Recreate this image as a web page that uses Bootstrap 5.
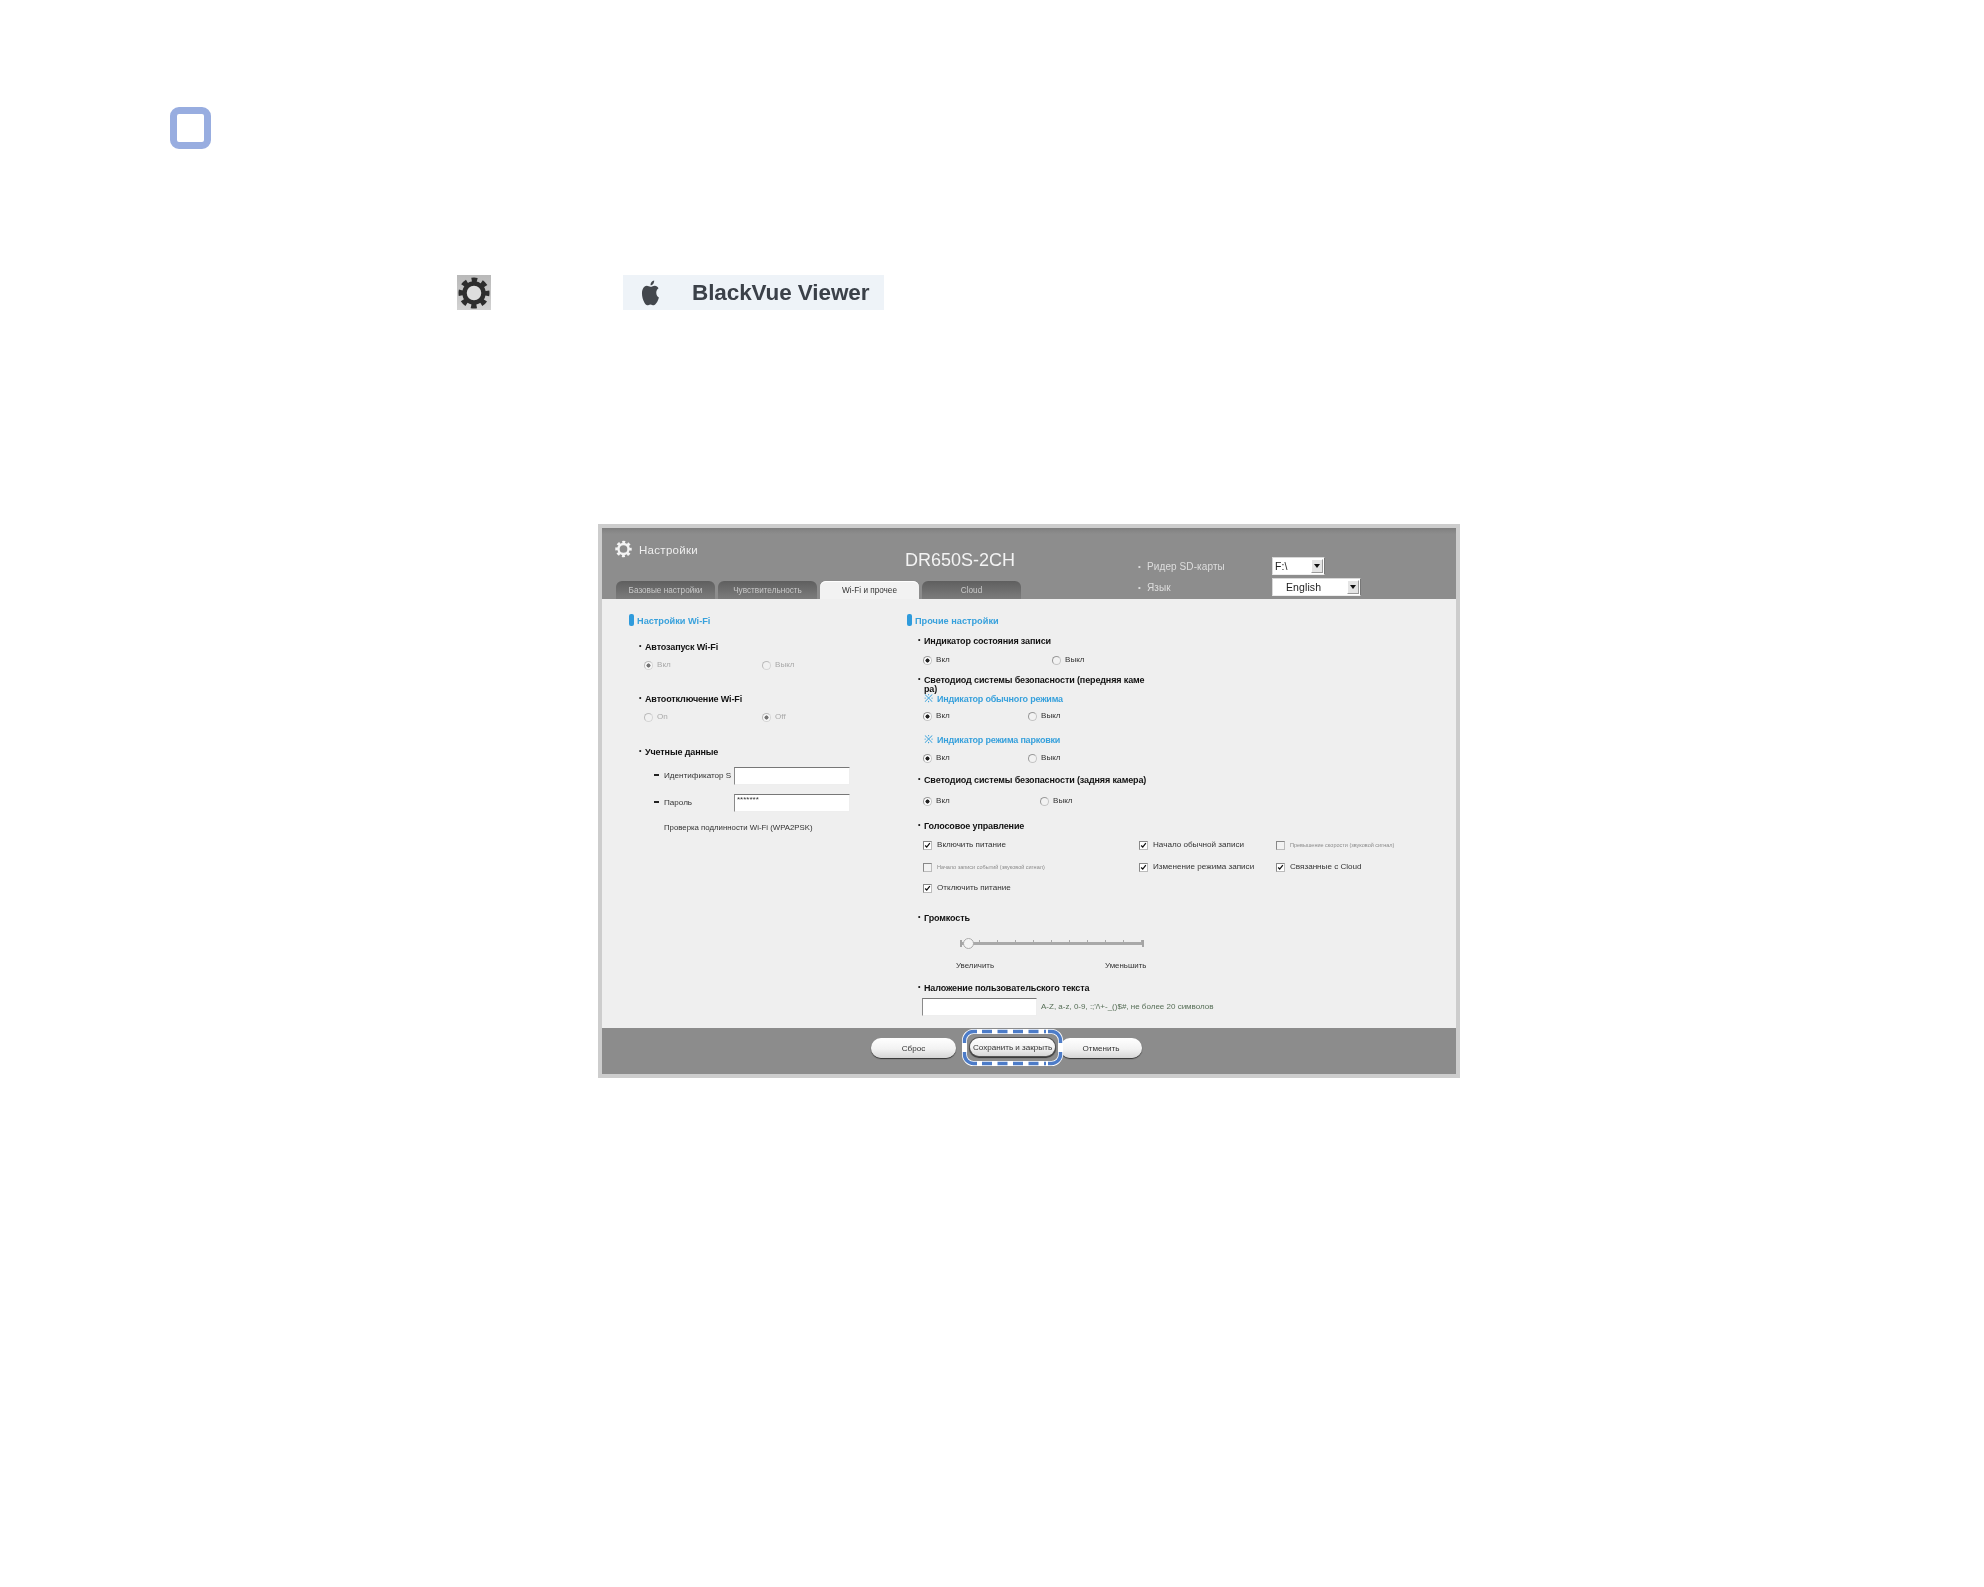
<!DOCTYPE html>
<html lang="ru">
<head>
  <meta charset="UTF-8">
  <title>BlackVue Viewer</title>
  <link href="https://cdn.jsdelivr.net/npm/bootstrap@5.3.0/dist/css/bootstrap.min.css" rel="stylesheet">
  <style>
    body { margin: 0; background: #fff; font-family: "Liberation Sans", Arial, sans-serif; }
    .page-wrap { width: 1984px; height: 1587px; padding-top: 107px; overflow: hidden; }

    .note-mark { width: 41px; height: 42px; margin-left: 170px; border: 7px solid #98ade0; border-radius: 9px; }
    .icon-row { margin-top: 126px; height: 35px; padding-left: 457px; }
    .gear-tile { width: 34px; height: 35px; background: linear-gradient(#b9b9b9, #d2d2d2); }
    .gear-tile svg { filter: blur(.6px); }
    .viewer-tile { width: 261px; height: 35px; margin-left: 132px; padding-left: 17px; background: #eef3f8; color: #3b4149; }
    .viewer-tile > * { filter: blur(.35px); }
    .viewer-name { margin-left: 31px; font-size: 22.5px; font-weight: 700; letter-spacing: -.1px; }

    .shot { width: 862px; height: 554px; margin: 214px 0 0 598px; border: 4px solid #cdcdcd; background: #efefef; font-size: 8.1px; color: #333; }
    .shot-head, .shot-body, .shot-foot { filter: blur(.3px); }

    .shot-head { height: 71px; background: linear-gradient(#7f7f7f, #8d8d8d 6px); color: #eee; }
    .head-left { width: 536px; padding-left: 13px; }
    .head-top { height: 53px; }
    .title-box { width: 290px; padding-top: 12px; font-size: 11.5px; line-height: 20px; letter-spacing: .3px; }
    .title-box svg { margin-right: 7px; }
    .model-name { padding-top: 22px; font-size: 18px; line-height: 20px; color: #f3f3f3; }
    .tab-strip { padding-left: 1px; gap: 3px; }
    .tab-item { width: 99px; height: 18px; line-height: 19px; padding: 0; text-align: center; border-radius: 6px 6px 0 0; background: linear-gradient(#5f5f5f, #7c7c7c); color: #c9c9c9; font-size: 8.2px; }
    .tab-item.tab-on { line-height: 20px; background: #f2f2f2; color: #333; box-shadow: inset 0 1px 0 #fff; }
    .head-right { padding-top: 29px; gap: 3px; }
    .reader-row { height: 18px; font-size: 10px; color: #ddd; letter-spacing: .1px; }
    .reader-name { width: 134px; }
    .reader-name::before { content: "•"; display: inline-block; width: 9px; font-size: 8px; vertical-align: 1px; }
    .fake-select { height: 18px; background: #fff; border: 1px solid #d8d8d8; border-right-color: #777; border-bottom-color: #eee; color: #222; font-size: 10.5px; line-height: 16px; }
    .select-short { width: 53px; padding-left: 2px; }
    .select-long { width: 89px; padding-left: 13px; }
    .fake-select i { width: 12px; height: 14px; margin: 1px; background: #e4e4e4; border: 1px solid #999; border-top-color: #fff; border-left-color: #fff; }
    .fake-select i::after { content: ""; border: 3px solid transparent; border-top: 4px solid #111; border-bottom: 0; }

    .shot-body { height: 429px; padding-top: 15px; }
    .col-wifi { width: 305px; padding-left: 27px; display: grid; align-content: start; grid-template-rows: 26px 18px 34px 18px 35px 24px 27px 25px 14px; }
    .col-other { width: 549px; display: grid; align-content: start; grid-template-rows: 20px 19px 19px 19px 18px 23px 19px 22px 21px 25px 19px 22px 21px 30px 25px 23px 22px 19px; }

    .line-item { height: 14px; line-height: 14px; white-space: nowrap; }
    .sec-title { color: #38a1dc; font-weight: 700; font-size: 9.2px; }
    .sec-title::before { content: ""; display: inline-block; width: 5px; height: 12px; margin-right: 3px; border-radius: 2px; background: #2f9bdc; vertical-align: -2px; }
    .bold-label { margin-top: -1px; font-weight: 700; color: #111; font-size: 9px; letter-spacing: -.13px; }
    .bold-label::before { content: "•"; display: inline-block; width: 6px; font-size: 7px; vertical-align: 2px; }
    .col-wifi .bold-label { padding-left: 10px; }
    .col-other .bold-label { padding-left: 11px; }
    .col-other .wrap-label { white-space: normal; word-break: break-all; width: 242px; line-height: 9px; padding-top: 3px; padding-left: 17px; text-indent: -6px; }
    .wrap-label::before { text-indent: 0; }
    .note-label { padding-left: 17px; color: #38a1dc; font-weight: 700; font-size: 9px; letter-spacing: -.2px; }
    .note-label b { display: inline-block; width: 13px; font-size: 11px; font-weight: 400; }

    .opt-row { padding-left: 15px; }
    .col-other .opt-row { padding-left: 16px; }
    .opt-118 > label:first-child { width: 118px; }
    .opt-129 > label:first-child { width: 129px; }
    .opt-105 > label:first-child { width: 105px; }
    .opt-117 > label:first-child { width: 117px; }
    .opt-row label { display: flex; align-items: center; gap: 4px; }
    .is-off { color: #a9a9a9; }
    .shot .form-check-input { width: 9px; height: 9px; margin: 0; float: none; flex: none; background-color: #f2f2f2; border: 1px solid #c4c4c4; border-top-color: #999; border-left-color: #999; box-shadow: none; }
    .shot .form-check-input[type=radio]:checked { background-color: #fff; background-image: radial-gradient(circle, #222 0 1.8px, transparent 2.3px); background-size: auto; }
    .shot .form-check-input[type=checkbox] { border-radius: 0; border-color: #888; border-right-color: #bbb; border-bottom-color: #bbb; }
    .shot .form-check-input[type=checkbox]:checked { background-color: #fff; background-image: url("data:image/svg+xml,%3csvg xmlns='http://www.w3.org/2000/svg' viewBox='0 0 9 9'%3e%3cpath fill='none' stroke='%23111' stroke-width='1.6' d='M1.5 4.5l2 2 4-5'/%3e%3c/svg%3e"); background-size: 100%; }
    .is-off .form-check-input { opacity: .6; }

    .cred-row { padding-left: 25px; }
    .cred-row > span { width: 80px; }
    .cred-row > span::before { content: ""; display: inline-block; width: 5px; height: 2px; margin-right: 5px; background: #222; vertical-align: 2px; }
    .cred-field { width: 116px; height: 18px; margin-top: -2px; padding: 0 2px; line-height: 9px; font-size: 8px; background: #fff; border: 1px solid #eee; border-top: 1px solid #777; border-left: 1px solid #8a8a8a; border-radius: 0; }
    .auth-note { padding-left: 35px; font-size: 7.8px; }

    .check-grid { padding-left: 16px; display: grid; grid-template-columns: 216px 137px 1fr; }
    .check-grid label { display: flex; align-items: center; gap: 5px; }
    .tiny-text { font-size: 5.5px; color: #8b8b8b; }

    .vol-box { position: relative; width: 184px; height: 7px; margin: 4px 0 0 53px; border-left: 2px solid #a4a4a4; border-right: 2px solid #a4a4a4; }
    .vol-line { height: 3px; margin-top: 2px; background: #a9a9a9; }
    .vol-ticks { position: absolute; inset: 0; background: repeating-linear-gradient(90deg, transparent 0 17px, #a9a9a9 17px 18px); clip-path: inset(0 0 4px 0); }
    .vol-knob { position: absolute; left: 1px; top: -2px; width: 11px; height: 11px; border-radius: 50%; background: #f4f4f4; border: 1px solid #aaa; }
    .vol-labels { padding-left: 49px; font-size: 7.9px; }
    .vol-labels span:first-child { width: 149px; }
    .text-row { padding-left: 15px; }
    .overlay-field { width: 115px; height: 18px; margin-top: -2px; margin-right: 4px; background: #fff; border: 1px solid #eee; border-top: 1px solid #777; border-left: 1px solid #8a8a8a; }
    .hint-text { color: #566e56; font-size: 8px; }

    .shot-foot { height: 46px; padding: 10px 0 0 269px; background: #8c8c8c; }
    .foot-btn { height: 20px; padding: 0; border: 0; border-radius: 10px; background: linear-gradient(#fff, #f2f2f2 55%, #d6d6d6); box-shadow: 0 1px 1px #333; color: #333; font-size: 8.1px; line-height: 21px; }
    .btn-reset { width: 85px; margin-right: 13px; }
    .btn-save { display: block; width: 85px; height: 18px; margin-left: 1px; line-height: 20px; box-shadow: 0 0 0 1px #555, 0 1px 1px 1px #333; }
    .btn-cancel { width: 82px; margin-left: 5px; }
    .save-wrap { position: relative; }
    .save-mark { position: absolute; left: -7px; top: -9px; pointer-events: none; }
  </style>
</head>
<body>
<div class="page-wrap">
  <div class="note-mark"></div>

  <div class="icon-row d-flex">
    <div class="gear-tile d-flex align-items-center justify-content-center">
      <svg width="32" height="32" viewBox="0 0 32 32">
        <circle cx="16" cy="16" r="13" fill="none" stroke="#2d2d2d" stroke-width="5" stroke-dasharray="5.5 4.71" stroke-dashoffset="2.75"/>
        <circle cx="16" cy="16" r="9.5" fill="#dedede" stroke="#2d2d2d" stroke-width="4.5"/>
      </svg>
    </div>
    <div class="viewer-tile d-flex align-items-center">
      <svg width="21" height="26" viewBox="0 0 16 16" preserveAspectRatio="none">
        <path fill="#43474d" d="M8 4.2C9.2 4.2 10 3.5 11.3 3.5c1.2 0 2.2.6 2.8 1.5-1.3.8-1.8 1.9-1.7 3 .1 1.3.8 2.2 2 2.7-.4 1.2-1.1 2.5-1.9 3.5-.6.7-1.2 1.3-2.1 1.3-1 0-1.3-.5-2.4-.5s-1.5.5-2.4.5-1.6-.7-2.2-1.5C2.2 12.3 1.5 10.2 1.5 8.3c0-2.9 1.8-4.7 3.7-4.7C6.3 3.6 7.1 4.2 8 4.2zM8 3.3C7.9 1.8 9.2.4 10.8.3c.1 1.6-1.3 3.1-2.8 3z"/>
      </svg>
      <span class="viewer-name">BlackVue Viewer</span>
    </div>
  </div>

  <div class="shot d-flex flex-column">
    <div class="shot-head d-flex">
      <div class="head-left">
        <div class="head-top d-flex">
          <div class="title-box">
            <svg width="17" height="18" viewBox="0 0 32 32" class="align-top">
              <circle cx="16" cy="16" r="13" fill="none" stroke="#f4f4f4" stroke-width="5" stroke-dasharray="5.5 4.71" stroke-dashoffset="2.75"/>
              <circle cx="16" cy="16" r="9.5" fill="#8c8c8c" stroke="#f4f4f4" stroke-width="4.5"/>
            </svg>Настройки
          </div>
          <div class="model-name">DR650S-2CH</div>
        </div>
        <ul class="nav tab-strip">
          <li><a class="nav-link tab-item">Базовые настройки</a></li>
          <li><a class="nav-link tab-item">Чувствительность</a></li>
          <li><a class="nav-link tab-item tab-on">Wi-Fi и прочее</a></li>
          <li><a class="nav-link tab-item">Cloud</a></li>
        </ul>
      </div>
      <div class="head-right d-flex flex-column">
        <div class="reader-row d-flex align-items-center">
          <span class="reader-name">Ридер SD-карты</span>
          <div class="fake-select select-short d-flex justify-content-between">F:\<i class="d-flex align-items-center justify-content-center"></i></div>
        </div>
        <div class="reader-row d-flex align-items-center">
          <span class="reader-name">Язык</span>
          <div class="fake-select select-long d-flex justify-content-between">English<i class="d-flex align-items-center justify-content-center"></i></div>
        </div>
      </div>
    </div>

    <div class="shot-body d-flex">
      <div class="col-wifi">
        <div class="line-item sec-title">Настройки Wi-Fi</div>
        <div class="line-item bold-label">Автозапуск Wi-Fi</div>
        <div class="line-item opt-row opt-118 is-off d-flex">
          <label><input class="form-check-input" type="radio" name="wa" checked disabled>Вкл</label>
          <label><input class="form-check-input" type="radio" name="wa" disabled>Выкл</label>
        </div>
        <div class="line-item bold-label">Автоотключение Wi-Fi</div>
        <div class="line-item opt-row opt-118 is-off d-flex">
          <label><input class="form-check-input" type="radio" name="wo" disabled>On</label>
          <label><input class="form-check-input" type="radio" name="wo" checked disabled>Off</label>
        </div>
        <div class="line-item bold-label">Учетные данные</div>
        <div class="line-item cred-row d-flex">
          <span>Идентификатор S</span>
          <input class="cred-field" type="text">
        </div>
        <div class="line-item cred-row d-flex">
          <span>Пароль</span>
          <div class="cred-field">*******</div>
        </div>
        <div class="line-item auth-note">Проверка подлинности Wi-Fi (WPA2PSK)</div>
      </div>

      <div class="col-other">
        <div class="line-item sec-title">Прочие настройки</div>
        <div class="line-item bold-label">Индикатор состояния записи</div>
        <div class="line-item opt-row opt-129 d-flex">
          <label><input class="form-check-input" type="radio" name="r1" checked>Вкл</label>
          <label><input class="form-check-input" type="radio" name="r1">Выкл</label>
        </div>
        <div class="line-item bold-label wrap-label">Светодиод системы безопасности (передняя камера)</div>
        <div class="line-item note-label"><b>※</b>Индикатор обычного режима</div>
        <div class="line-item opt-row opt-105 d-flex">
          <label><input class="form-check-input" type="radio" name="r2" checked>Вкл</label>
          <label><input class="form-check-input" type="radio" name="r2">Выкл</label>
        </div>
        <div class="line-item note-label"><b>※</b>Индикатор режима парковки</div>
        <div class="line-item opt-row opt-105 d-flex">
          <label><input class="form-check-input" type="radio" name="r3" checked>Вкл</label>
          <label><input class="form-check-input" type="radio" name="r3">Выкл</label>
        </div>
        <div class="line-item bold-label">Светодиод системы безопасности (задняя камера)</div>
        <div class="line-item opt-row opt-117 d-flex">
          <label><input class="form-check-input" type="radio" name="r4" checked>Вкл</label>
          <label><input class="form-check-input" type="radio" name="r4">Выкл</label>
        </div>
        <div class="line-item bold-label">Голосовое управление</div>
        <div class="line-item check-grid">
          <label><input class="form-check-input" type="checkbox" checked>Включить питание</label>
          <label><input class="form-check-input" type="checkbox" checked>Начало обычной записи</label>
          <label><input class="form-check-input" type="checkbox"><span class="tiny-text">Превышение скорости (звуковой сигнал)</span></label>
        </div>
        <div class="line-item check-grid">
          <label><input class="form-check-input" type="checkbox"><span class="tiny-text">Начало записи событий (звуковой сигнал)</span></label>
          <label><input class="form-check-input" type="checkbox" checked>Изменение режима записи</label>
          <label><input class="form-check-input" type="checkbox" checked>Связанные с Cloud</label>
        </div>
        <div class="line-item check-grid">
          <label><input class="form-check-input" type="checkbox" checked>Отключить питание</label>
        </div>
        <div class="line-item bold-label">Громкость</div>
        <div class="vol-box">
          <div class="vol-line"></div>
          <div class="vol-ticks"></div>
          <div class="vol-knob"></div>
        </div>
        <div class="line-item vol-labels d-flex"><span>Увеличить</span><span>Уменьшить</span></div>
        <div class="line-item bold-label">Наложение пользовательского текста</div>
        <div class="line-item text-row d-flex">
          <input class="overlay-field" type="text">
          <span class="hint-text">A-Z, a-z, 0-9, :;'/\+-_()$#, не более 20 символов</span>
        </div>
      </div>
    </div>

    <div class="shot-foot d-flex align-items-start">
      <button class="btn foot-btn btn-reset" type="button">Сброс</button>
      <div class="save-wrap">
        <button class="btn foot-btn btn-save" type="button">Сохранить и закрыть</button>
        <svg class="save-mark" width="101" height="37" viewBox="0 0 101 37" fill="none">
          <rect x="2.5" y="2.5" width="96" height="32" rx="9" stroke="#fff" stroke-width="5"/>
          <g stroke="#4d7cc8" stroke-width="3.4">
            <path d="M2.5 14v-2.5a9 9 0 0 1 9-9H15M86 2.5h3.500a9 9 0 0 1 9 9V14M98.500 23v2.500a9 9 0 0 1-9 9H86M15 34.500h-3.500a9 9 0 0 1-9-9V23"/>
            <path d="M20 2.500H84M20 34.500H84" stroke-dasharray="10 5.500"/>
          </g>
        </svg>
      </div>
      <button class="btn foot-btn btn-cancel" type="button">Отменить</button>
    </div>
  </div>
</div>
<script src="https://cdn.jsdelivr.net/npm/bootstrap@5.3.0/dist/js/bootstrap.bundle.min.js"></script>
</body>
</html>
